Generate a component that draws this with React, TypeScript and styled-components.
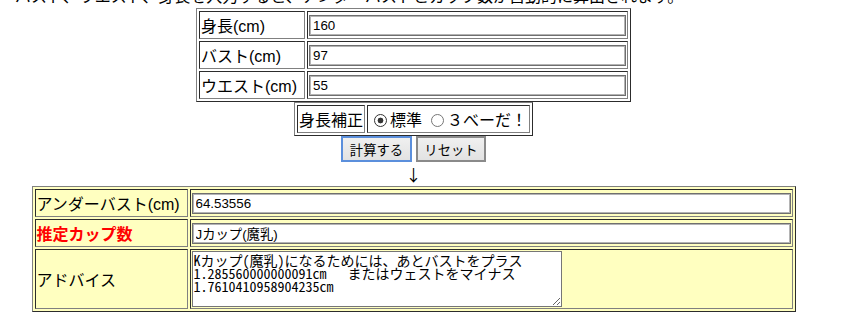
import React from "react"
import styled, { createGlobalStyle } from "styled-components"

const GlobalStyle = createGlobalStyle`
  html, body {
    margin: 0;
    padding: 0;
  }
  body {
    background: #ffffff;
    color: #000000;
    font-family: "Liberation Sans", "Noto Sans CJK JP", sans-serif;
    font-size: 16px;
    overflow: hidden;
  }
`

const Page = styled.div`
  width: 811px;
  padding: 0 8px;
`

const Lead = styled.p`
  margin: -7px 0 0;
  padding-left: 7px;
  height: 15px;
  line-height: 8px;
  white-space: nowrap;
`

const Center = styled.div`
  text-align: center;
`

const Frame = styled.table<{ $width: number; $bg?: string }>`
  width: ${p => p.$width}px;
  margin: 0 auto;
  border: 1px outset gray;
  border-collapse: separate;
  border-spacing: 2px;
  background: ${p => p.$bg || "transparent"};
  text-align: left;
`

const Cell = styled.td<{ $w?: number; $h?: number }>`
  box-sizing: border-box;
  border: 1px inset gray;
  padding: 1px;
  height: ${p => p.$h || 28}px;
  width: ${p => (p.$w ? `${p.$w}px` : "auto")};
  vertical-align: middle;
  white-space: nowrap;
`

const Label = styled.span<{ $alert?: boolean }>`
  color: ${p => (p.$alert ? "#ff0000" : "#000000")};
  font-weight: ${p => (p.$alert ? "bold" : "normal")};
`

const Field = styled.input`
  display: block;
  box-sizing: border-box;
  width: 100%;
  height: 21px;
  margin: 0;
  padding: 1px 3px;
  border: 1px solid #6f6f6f;
  box-shadow: inset 0 0 0 1px #b4b4b4;
  background: #ffffff;
  font-family: "Liberation Sans", "Noto Sans CJK JP", sans-serif;
  font-size: 13.33px;
  color: #000000;
  outline: none;
`

const Radio = styled.input`
  appearance: none;
  width: 13px;
  height: 13px;
  margin: 0 3px 0 5px;
  border: 1px solid #767676;
  border-radius: 50%;
  background: #ffffff;
  vertical-align: -1px;

  &:checked {
    border-color: #333333;
    background: radial-gradient(circle, #333333 0 2.6px, #ffffff 3.2px);
  }
`

const ButtonRow = styled.div`
  display: flex;
  justify-content: center;
  gap: 4px;
  height: 26px;
`

const Button = styled.button<{ $focused?: boolean; $w: number }>`
  box-sizing: border-box;
  width: ${p => p.$w}px;
  height: 26px;
  padding: 0;
  border: 2px solid ${p => (p.$focused ? "#5b8fdc" : "#8a8a8a")};
  background: linear-gradient(#f0f0f0, #e2e2e2);
  font-family: "Liberation Sans", "Noto Sans CJK JP", sans-serif;
  font-size: 13.33px;
  color: #000000;
`

const Arrow = styled.div`
  height: 24px;
  line-height: 24px;
  font-family: "Noto Sans CJK JP", sans-serif;
  font-size: 16px;
`

const Advice = styled.textarea`
  display: block;
  box-sizing: border-box;
  width: 370px;
  height: 56px;
  margin: 0;
  padding: 2px 1px;
  border: 1px solid #767676;
  background: #ffffff;
  font-family: "Noto Sans Mono CJK JP", "Liberation Mono", monospace;
  font-size: 14px;
  line-height: 13px;
  color: #000000;
  overflow: hidden;
  outline: none;
`

const App = () => {
  const inputs = [
    { label: "身長(cm)", value: "160" },
    { label: "バスト(cm)", value: "97" },
    { label: "ウエスト(cm)", value: "55" },
  ]

  const advice =
    "Kカップ(魔乳)になるためには、あとバストをプラス\n1.285560000000091cm　 またはウェストをマイナス\n1.7610410958904235cm"

  return (
    <Page>
      <GlobalStyle />
      <Lead>バスト、ウエスト、身長を入力すると、アンダーバストとカップ数が自動的に算出されます。</Lead>
      <Center>
        <Frame $width={435}>
          <tbody>
            {inputs.map(row => (
              <tr key={row.label}>
                <Cell $w={106}>
                  <Label>{row.label}</Label>
                </Cell>
                <Cell>
                  <Field defaultValue={row.value} />
                </Cell>
              </tr>
            ))}
          </tbody>
        </Frame>

        <Frame $width={239}>
          <tbody>
            <tr>
              <Cell $w={68}>身長補正</Cell>
              <Cell>
                <Radio type="radio" name="fix" defaultChecked />
                標準
                <Radio type="radio" name="fix" style={{ marginLeft: 9 }} />
                ３べーだ！
              </Cell>
            </tr>
          </tbody>
        </Frame>

        <ButtonRow>
          <Button $focused $w={71}>計算する</Button>
          <Button $w={70}>リセット</Button>
        </ButtonRow>

        <Arrow>↓</Arrow>

        <Frame $width={764} $bg="#ffffc0">
          <tbody>
            <tr>
              <Cell $w={153}>
                <Label>アンダーバスト(cm)</Label>
              </Cell>
              <Cell>
                <Field defaultValue="64.53556" />
              </Cell>
            </tr>
            <tr>
              <Cell>
                <Label $alert>推定カップ数</Label>
              </Cell>
              <Cell>
                <Field defaultValue="Jカップ(魔乳)" />
              </Cell>
            </tr>
            <tr>
              <Cell $h={60}>
                <Label>アドバイス</Label>
              </Cell>
              <Cell $h={60}>
                <Advice defaultValue={advice} />
              </Cell>
            </tr>
          </tbody>
        </Frame>
      </Center>
    </Page>
  )
}

export default App
